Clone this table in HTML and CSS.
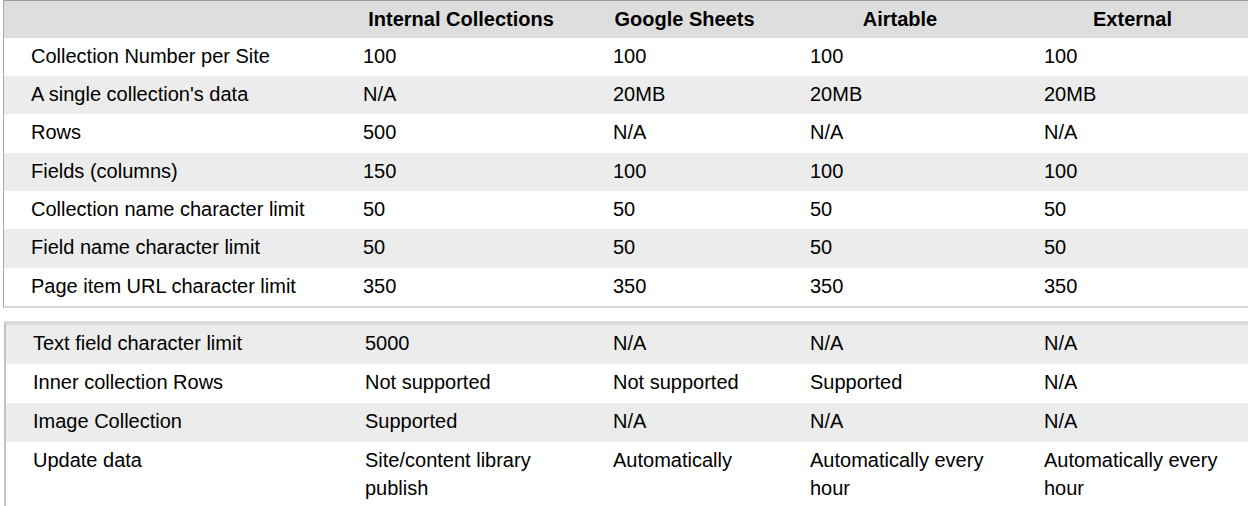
FILE: index.html
```html
<!DOCTYPE html>
<html>
<head>
<meta charset="utf-8">
<link rel="stylesheet" href="styles.css">
</head>
<body>
<table class="grid t1">
  <colgroup><col class="c1"><col class="c2"><col class="c3"><col class="c4"><col class="c5"></colgroup>
  <thead>
    <tr><th></th><th>Internal Collections</th><th>Google Sheets</th><th>Airtable</th><th>External</th></tr>
  </thead>
  <tbody>
    <tr><td>Collection Number per Site</td><td>100</td><td>100</td><td>100</td><td>100</td></tr>
    <tr class="alt"><td>A single collection's data</td><td>N/A</td><td>20MB</td><td>20MB</td><td>20MB</td></tr>
    <tr><td>Rows</td><td>500</td><td>N/A</td><td>N/A</td><td>N/A</td></tr>
    <tr class="alt"><td>Fields (columns)</td><td>150</td><td>100</td><td>100</td><td>100</td></tr>
    <tr><td>Collection name character limit</td><td>50</td><td>50</td><td>50</td><td>50</td></tr>
    <tr class="alt"><td>Field name character limit</td><td>50</td><td>50</td><td>50</td><td>50</td></tr>
    <tr><td>Page item URL character limit</td><td>350</td><td>350</td><td>350</td><td>350</td></tr>
  </tbody>
</table>
<table class="grid t2">
  <colgroup><col class="c1"><col class="c2b"><col class="c3"><col class="c4"><col class="c5"></colgroup>
  <tbody>
    <tr class="alt"><td>Text field character limit</td><td>5000</td><td>N/A</td><td>N/A</td><td>N/A</td></tr>
    <tr><td>Inner collection Rows</td><td>Not supported</td><td>Not supported</td><td>Supported</td><td>N/A</td></tr>
    <tr class="alt"><td>Image Collection</td><td>Supported</td><td>N/A</td><td>N/A</td><td>N/A</td></tr>
    <tr><td>Update data</td><td>Site/content library<br>publish</td><td>Automatically</td><td>Automatically every<br>hour</td><td>Automatically every<br>hour</td></tr>
  </tbody>
</table>
</body>
</html>
```
FILE: styles.css
```css
html, body {
  margin: 0;
  background: #ffffff;
}
body {
  font-family: "Liberation Sans", Arial, sans-serif;
  font-size: 20px;
  color: #000000;
  overflow: hidden;
}
.grid {
  border-collapse: separate;
  border-spacing: 0;
  table-layout: fixed;
}
.grid td,
.grid th {
  padding: 5px 0 5px 27px;
  line-height: 28px;
  text-align: left;
  vertical-align: top;
  white-space: nowrap;
}
.grid th {
  padding: 4px 0 5px 0;
  text-align: center;
  font-weight: bold;
  background: #dedede;
}
.t1 td {
  padding-top: 4px;
  padding-bottom: 6px;
}
.t1 tbody tr:nth-child(3n) td {
  padding-bottom: 7px;
}
.grid tr.alt td {
  background: #ececec;
}
.c1 { width: 332px; }
.c2 { width: 250px; }
.c2b { width: 248px; }
.c3 { width: 197px; }
.c4 { width: 234px; }
.c5 { width: 231px; }
.t1 {
  margin-left: 3px;
  width: 1245px;
  border-left: 1px solid #a9a9a9;
  border-top: 1px solid #9d9d9d;
  border-bottom: 2px solid #d9d9d9;
}
.t2 {
  margin-top: 13px;
  margin-left: 4px;
  width: 1244px;
  border-left: 2px solid #c4c4c4;
  border-top: 4px solid #dcdcdc;
}
.t2 td {
  padding-top: 4px;
  padding-bottom: 7px;
}
```
